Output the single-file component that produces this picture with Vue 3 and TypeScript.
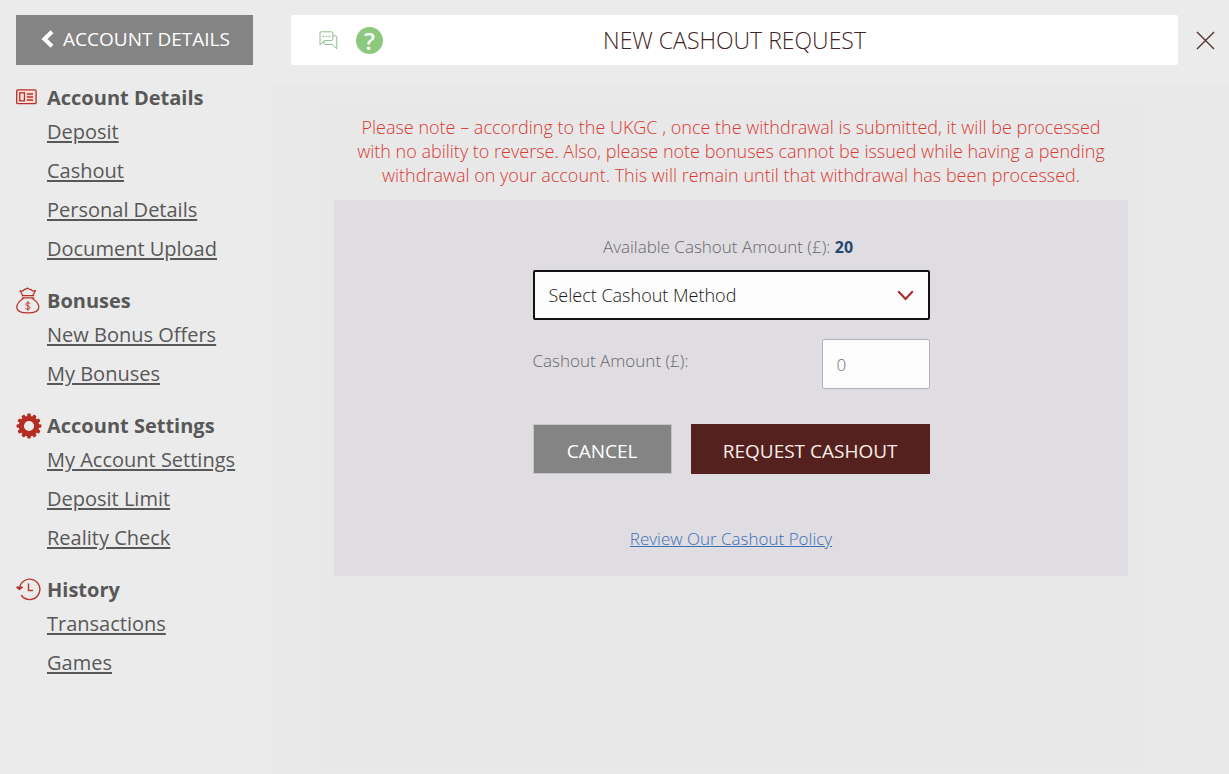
<script setup lang="ts">
import { ref } from 'vue'

interface MenuGroup {
  title: string
  icon: 'card' | 'bag' | 'gear' | 'history'
  links: string[]
}

const groups: MenuGroup[] = [
  { title: 'Account Details', icon: 'card', links: ['Deposit', 'Cashout', 'Personal Details', 'Document Upload'] },
  { title: 'Bonuses', icon: 'bag', links: ['New Bonus Offers', 'My Bonuses'] },
  { title: 'Account Settings', icon: 'gear', links: ['My Account Settings', 'Deposit Limit', 'Reality Check'] },
  { title: 'History', icon: 'history', links: ['Transactions', 'Games'] },
]

const teeth = Array.from({ length: 12 }, (_, i) => i * 30)
const method = ref('')
const amount = ref('')
</script>

<template>
  <div class="page">
    <aside class="sidebar">
      <button type="button" class="back">
        <svg width="13" height="18" viewBox="0 0 13 18" aria-hidden="true">
          <path d="M11 1.800 3.500 9l7.500 7.200" fill="none" stroke="#fff" stroke-width="4.200" />
        </svg>
        <span>ACCOUNT DETAILS</span>
      </button>
      <nav class="menu">
        <section v-for="group in groups" :key="group.title" class="group">
          <h2>
            <span class="icon">
              <svg v-if="group.icon === 'card'" width="21" height="18" viewBox="0 0 21 18" aria-hidden="true">
                <g stroke="#b5322c">
                  <rect x="0.700" y="0.900" width="19.400" height="13.800" rx="1" fill="#fbdcd6" stroke-width="1.300" />
                  <rect x="3.800" y="3.800" width="4.600" height="8" fill="#fbe6e2" stroke-width="1.300" />
                  <path d="M10.800 5h6.200M10.800 8h6.200M10.800 11h6.200" stroke-width="1.300" />
                </g>
              </svg>
              <svg v-else-if="group.icon === 'bag'" width="24" height="28" viewBox="0 0 25 29" aria-hidden="true">
                <g fill="none" stroke="#b9332d" stroke-width="1.300" stroke-linejoin="round" stroke-linecap="round">
                  <path d="M7 8.500 4.200 3.800c1.800.8 3.600.4 4.800-1.600 1.400.4 2-.6 3-1.200 1 .8 1.800 1.800 3.400 1.400 1.200 1.800 3 2.200 5 1.200L17.500 8.500" />
                  <path d="M6.500 9h12M6.500 11.300h12" />
                  <path d="M7.500 11.800C3.500 14.300.8 17.500.8 21c0 4.200 4.500 5.900 11.500 5.900S23.800 25.200 23.800 21c0-3.500-2.800-6.700-6.800-9.200" />
                  <path d="M14.600 17c-1-1-4.400-1-4.400.9 0 2.300 4.500 1.300 4.500 3.700 0 1.900-3.500 1.900-4.700.8M12.400 15v9.300" stroke-width="1" />
                </g>
              </svg>
              <svg v-else-if="group.icon === 'gear'" width="26" height="26" viewBox="0 0 26 26" aria-hidden="true">
                <rect v-for="angle in teeth" :key="angle" x="11.200" y="0.600" width="3.600" height="5" rx="1" fill="#b72c22" :transform="`rotate(${angle} 13 13)`" />
                <circle cx="13" cy="13" r="7.700" fill="none" stroke="#b72c22" stroke-width="5.200" />
              </svg>
              <svg v-else width="25" height="24" viewBox="0 0 25 24" aria-hidden="true">
                <g fill="none" stroke="#b9382c" stroke-width="1.400" stroke-linecap="round" stroke-linejoin="round">
                  <path d="M3.500 10.500A10.200 10.200 0 1 1 5.500 17.500" />
                  <path d="M.8 9.300 3.400 11.500 6.400 9.300z" fill="#b9382c" />
                  <path d="M12.500 6v6.500h4" />
                </g>
              </svg>
            </span>
            {{ group.title }}
          </h2>
          <ul>
            <li v-for="link in group.links" :key="link"><a href="#">{{ link }}</a></li>
          </ul>
        </section>
      </nav>
    </aside>

    <main class="main">
      <div class="topbar">
        <header class="titlebar">
          <div class="tools">
            <button type="button" class="plain" aria-label="Chat">
              <svg width="19" height="19" viewBox="0 0 19 19" aria-hidden="true">
                <g fill="none" stroke="#8fbd8c" stroke-width="1" stroke-linejoin="round">
                  <path d="M2 .8h10.500q1.300 0 1.300 1.300v6.200q0 1.300-1.300 1.300H5.500L1 13.800V2Q1 .8 2 .8z" />
                  <path d="M13.800 4.800h2.700q1.300 0 1.300 1.300v11.700l-4.500-4.400H6.200q-1.200 0-1.700-1.200L5.500 9.600" />
                  <path d="M3.500 5.500h8" stroke-width="1.500" stroke-dasharray="1.500 1.600" />
                </g>
              </svg>
            </button>
            <button type="button" class="plain help" aria-label="Help">?</button>
          </div>
          <h1>NEW CASHOUT REQUEST</h1>
        </header>
        <button type="button" class="plain close" aria-label="Close">
          <svg width="19" height="19" viewBox="0 0 19 19" aria-hidden="true">
            <path d="M1 1 18 18M18 1 1 18" stroke="#54322f" stroke-width="1.400" fill="none" />
          </svg>
        </button>
      </div>

      <div class="surface">
        <div class="content">
          <p class="note">
            Please note – according to the UKGC , once the withdrawal is submitted, it will be processed with no ability
            to reverse. Also, please note bonuses cannot be issued while having a pending withdrawal on your account.
            This will remain until that withdrawal has been processed.
          </p>
          <form class="panel" @submit.prevent>
            <div class="fields">
              <p class="available">Available Cashout Amount (£): <strong>20</strong></p>
              <div class="select">
                <select v-model="method" aria-label="Cashout method">
                  <option value="">Select Cashout Method</option>
                </select>
                <svg width="17" height="11" viewBox="0 0 17 11" aria-hidden="true">
                  <path d="M1.200 1.200 8.500 9l7.300-7.800" fill="none" stroke="#a8282b" stroke-width="2" />
                </svg>
              </div>
              <div class="amount">
                <label for="amount">Cashout Amount (£):</label>
                <input id="amount" v-model="amount" type="text" placeholder="0" />
              </div>
              <div class="actions">
                <button type="button" class="cancel">CANCEL</button>
                <button type="submit" class="request">REQUEST CASHOUT</button>
              </div>
              <a href="#" class="policy">Review Our Cashout Policy</a>
            </div>
          </form>
        </div>
      </div>
    </main>
  </div>
</template>

<style>
body {
  margin: 0;
  background: #ebebeb;
}
</style>

<style scoped>
.page {
  display: grid;
  grid-template-columns: 272px 1fr;
  min-height: 100vh;
  font-family: "Open Sans", "Noto Sans", sans-serif;
  color: #585858;
  background: #ebebeb;
}

.page * {
  box-sizing: border-box;
}

button,
input,
select {
  font-family: inherit;
}

.sidebar {
  padding: 15px 19px 0 16px;
}

.back {
  display: flex;
  align-items: center;
  justify-content: center;
  gap: 9px;
  width: 100%;
  height: 50px;
  padding: 0 0 2px 2px;
  border: 0;
  background: #848484;
  color: #fff;
  font-size: 19px;
}

.menu {
  display: flex;
  flex-direction: column;
  gap: 24px;
  padding-top: 19px;
}

.group h2 {
  display: flex;
  align-items: center;
  margin: 0 0 6px;
  font-size: 20px;
  line-height: 28px;
  font-weight: 700;
  white-space: nowrap;
}

.icon {
  display: flex;
  flex: none;
  width: 31px;
}

.group ul {
  display: flex;
  flex-direction: column;
  gap: 11px;
  margin: 0;
  padding: 0 0 0 31px;
  list-style: none;
}

.group li {
  font-size: 20px;
  line-height: 28px;
  white-space: nowrap;
}

.group a {
  color: inherit;
  text-underline-offset: 2px;
}

.main {
  display: flex;
  flex-direction: column;
}

.topbar {
  display: flex;
  align-items: center;
  padding: 15px 14px 19px 19px;
}

.titlebar {
  display: grid;
  grid-template-columns: 92px 1fr 92px;
  align-items: center;
  flex: 1;
  height: 50px;
  border-radius: 2px;
  background: #fff;
}

.titlebar h1 {
  margin: 0;
  color: #3f2423;
  font-size: 23px;
  line-height: 30px;
  font-weight: 340;
  text-align: center;
}

.tools {
  display: flex;
  align-items: center;
  gap: 18px;
  padding-left: 28px;
}

.plain {
  display: flex;
  align-items: center;
  justify-content: center;
  flex: none;
  padding: 0;
  border: 0;
  background: none;
}

.help {
  width: 27px;
  height: 27px;
  border-radius: 50%;
  background: #8cc97f;
  color: #fff;
  font-size: 24px;
  line-height: 27px;
  font-weight: 600;
}

.close {
  margin-left: 18px;
}

.surface {
  flex: 1;
  padding: 20px 84px 8px 44px;
  background: #e9e9e9;
}

.content {
  height: 100%;
  padding: 11px 17px 0 18px;
  background: #e8e8e8;
}

.note {
  margin: 0;
  padding: 0 12px 13px;
  color: #d83a35;
  font-size: 18px;
  line-height: 24px;
  font-weight: 340;
  text-align: center;
}

.panel {
  display: flex;
  justify-content: center;
  padding: 35px 16px 25px;
  background: #dfdde1;
}

.fields {
  display: flex;
  flex-direction: column;
  align-items: stretch;
  width: 50%;
  min-width: 397px;
}

.available {
  margin: 0 0 11px;
  padding-right: 6px;
  color: #68676a;
  font-size: 17px;
  line-height: 24px;
  font-weight: 340;
  text-align: center;
}

.available strong {
  color: #26486f;
  font-size: 16px;
  font-weight: 700;
}

.select {
  display: grid;
  align-items: center;
}

.select > * {
  grid-area: 1 / 1;
}

.select svg {
  justify-self: end;
  margin-right: 16px;
  pointer-events: none;
}

.select select {
  width: 100%;
  height: 50px;
  padding: 0 44px 0 14px;
  border: 2px solid #111;
  border-radius: 2px;
  appearance: none;
  background: #fdfdfd;
  color: #181818;
  font-size: 18px;
  font-weight: 340;
}

.amount {
  display: flex;
  justify-content: space-between;
  margin-top: 19px;
  color: #68676a;
  font-size: 17px;
  font-weight: 340;
}

.amount label {
  padding-top: 10px;
  line-height: 24px;
}

.amount input {
  width: 108px;
  height: 50px;
  padding: 0 14px;
  border: 1px solid #b4b4b8;
  border-radius: 2px;
  background: #fdfdfd;
  color: #68676a;
  font-size: 17px;
  font-weight: 340;
}

.amount input::placeholder {
  color: #707070;
}

.actions {
  display: flex;
  gap: 19px;
  margin-top: 35px;
}

.actions button {
  height: 50px;
  padding: 4px 0 0;
  border: 0;
  color: #fff;
  font-size: 19px;
}

.actions .cancel {
  flex: 138;
  border: 1px solid #c4c4c6;
  background: #848484;
}

.actions .request {
  flex: 240;
  background: #55211f;
  color: #fbeeea;
}

.policy {
  align-self: center;
  margin-top: 53px;
  color: #3a70b5;
  font-size: 17px;
  line-height: 24px;
  font-weight: 340;
}
</style>
